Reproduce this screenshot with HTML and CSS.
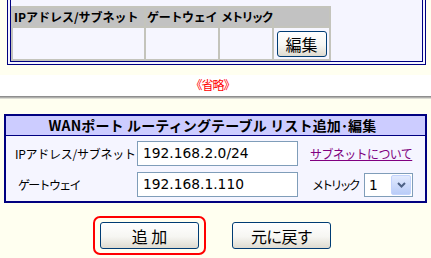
FILE: index.html
```html
<!DOCTYPE html>
<html lang="ja">
<head>
<meta charset="utf-8">
<link rel="stylesheet" href="styles.css">
</head>
<body>
<div class="top">
  <div class="outer">
    <div class="inner">
      <table class="list">
        <tr>
          <th class="c1">IPアドレス/サブネット</th>
          <th class="c2">ゲートウェイ</th>
          <th class="c3">メトリック</th>
          <th class="c4"></th>
        </tr>
        <tr>
          <td></td>
          <td></td>
          <td></td>
          <td class="act"><button class="btn edit">編集</button></td>
        </tr>
      </table>
    </div>
  </div>
</div>
<div class="omit">《省略》</div>
<div class="sep"></div>
<div class="bottom">
  <div class="form">
    <div class="title">WANポート ルーティングテーブル リスト追加･編集</div>
    <div class="fields">
      <div class="lbl lbl-ip">IPアドレス/サブネット</div>
      <div class="input">192.168.2.0/24</div>
      <a class="link" href="#">サブネットについて</a>
      <div class="lbl lbl-gw">ゲートウェイ</div>
      <div class="input">192.168.1.110</div>
      <div class="metric">
        <span class="lbl lbl-mt">メトリック</span>
        <div class="select">
          <span class="val">1</span>
          <span class="drop"><svg width="9" height="6" viewBox="0 0 9 6"><path d="M1 1 L4.5 4.5 L8 1" fill="none" stroke="#4d6185" stroke-width="2"/></svg></span>
        </div>
      </div>
    </div>
  </div>
  <div class="actions">
    <div class="hl"><button class="btn add">追 加</button></div>
    <button class="btn back">元に戻す</button>
  </div>
</div>
</body>
</html>
```

FILE: styles.css
```css
* { box-sizing: border-box; }
html, body { height: 100%; }
body {
  margin: 0;
  background: #fffff0;
  font-family: "Noto Sans CJK JP", "Noto Sans", sans-serif;
  font-size: 12px;
  color: #000;
  overflow: hidden;
}
.top {
  height: 75px;
  padding: 0 5px 0 7px;
  overflow: hidden;
}
.outer {
  margin-top: -4px;
  border: 1px solid #000080;
  padding: 2px;
  background: #f5f5ff;
}
.inner {
  border: 1px solid #000080;
  padding-top: 6px;
  background: #f5f5ff;
}
.list {
  border-collapse: separate;
  border-spacing: 2px;
  background: #c4c4bc;
}
.list th {
  height: 18px;
  padding: 0 0 0 1px;
  background: #c2c2c2;
  font-weight: bold;
  font-size: 12px;
  line-height: 18px;
  text-align: left;
  white-space: nowrap;
}
.list td {
  height: 31px;
  padding: 0;
  background: #f6f6ff;
}
.c1 { width: 131px; }
.c2 { width: 72px; letter-spacing: -0.3px; }
.c3 { width: 52px; letter-spacing: -1.8px; }
.c4 { width: 55px; }
.act { text-align: center; vertical-align: middle; }
.omit {
  height: 21px;
  background: #fff;
  color: #ff0000;
  text-align: center;
  line-height: 20px;
  font-size: 12px;
  letter-spacing: -1px;
  padding-right: 6px;
}
.sep {
  height: 3px;
  background: linear-gradient(#8e8e8e 0 1px, #b0b0ac 1px 2px, #dcdcd4 2px);
}
.bottom {
  padding: 15px 4px 0 4px;
}
.form {
  border: 2px solid #000080;
  background: #f5f5ff;
}
.title {
  height: 20px;
  background: #ccccff;
  border-bottom: 1px solid #000080;
  text-align: center;
  font-weight: bold;
  font-size: 14px;
  line-height: 19px;
  letter-spacing: 0.15px;
  padding-right: 6px;
}
.fields {
  display: grid;
  grid-template-columns: 122px 161px auto;
  grid-auto-rows: 25px;
  row-gap: 6px;
  align-items: center;
  padding: 5px 0 4px 9px;
}
.lbl { white-space: nowrap; font-size: 12px; }
.lbl-ip { letter-spacing: -0.25px; }
.lbl-gw { padding-left: 3px; letter-spacing: -1.7px; }
.lbl-mt { letter-spacing: -2.8px; }
.input {
  height: 25px;
  border: 1px solid #7f9db9;
  background: #fff;
  padding-left: 5px;
  font-family: "DejaVu Sans", sans-serif;
  font-size: 13.8px;
  line-height: 23px;
}
.link {
  margin-left: 12px;
  color: #800080;
  text-decoration: underline;
  letter-spacing: -0.6px;
  white-space: nowrap;
}
.metric {
  display: flex;
  align-items: center;
  gap: 6px;
  margin-left: 14px;
}
.select {
  width: 49px;
  height: 24px;
  border: 1px solid #7f9db9;
  background: #fff;
  display: flex;
  align-items: stretch;
  justify-content: space-between;
  padding: 1px;
}
.val {
  padding-left: 3px;
  font-family: "DejaVu Sans", sans-serif;
  font-size: 13.8px;
  line-height: 20px;
}
.drop {
  width: 20px;
  border: 1px solid #c3d3fd;
  border-radius: 2px;
  background: linear-gradient(#e2eafe, #b9ccf8);
  display: flex;
  align-items: center;
  justify-content: center;
}
.actions {
  display: flex;
  align-items: center;
  gap: 26px;
  padding: 13px 0 0 89px;
}
.hl {
  border: 2px solid #ff0000;
  border-radius: 7px;
  padding: 4px 5px;
}
.btn {
  font-family: "Noto Sans CJK JP", sans-serif;
  font-size: 16px;
  line-height: 1;
  color: #000;
  border: 1px solid #003c74;
  border-radius: 3px;
  background: linear-gradient(#ffffff, #f6f6f2 55%, #dedbd0);
  padding: 0;
}
.edit { width: 50px; height: 26px; }
.add, .back { width: 99px; height: 27px; }
.back { letter-spacing: -0.8px; }
```
